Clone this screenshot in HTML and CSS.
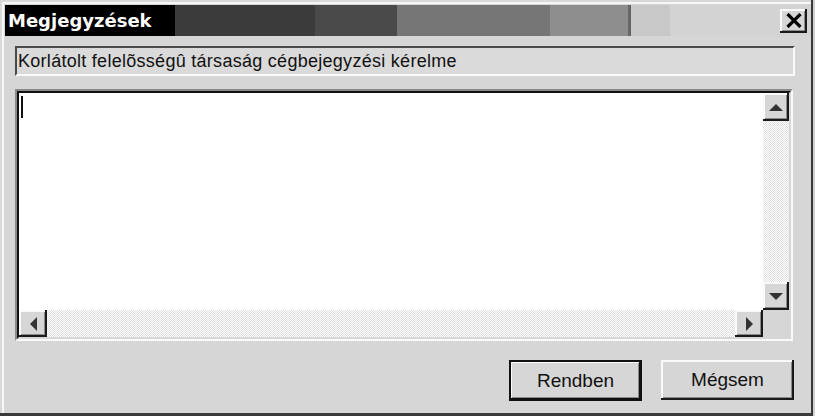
FILE: index.html
```html
<!DOCTYPE html>
<html lang="hu">
<head>
<meta charset="utf-8">
<title>Megjegyzések</title>
<link rel="stylesheet" href="styles.css">
</head>
<body>
<div class="window">
  <div class="titlebar">
    <span class="title">Megjegyzések</span>
    <button class="close" aria-label="Bezárás">
      <svg width="16" height="15" viewBox="0 0 16 15"><path d="M1.5 1 L14.5 14 M14.5 1 L1.5 14" stroke="#000" stroke-width="3.2" fill="none"/></svg>
    </button>
  </div>
  <div class="subject">Korlátolt felelõsségû társaság cégbejegyzési kérelme</div>
  <div class="editor">
    <div class="editor-inner">
      <div class="text-area"><span class="caret"></span></div>
      <div class="vscroll">
        <div class="sbtn vbtn"><svg width="14" height="7" viewBox="0 0 14 7"><path d="M7 0 L14 7 L0 7 Z" fill="#333"/></svg></div>
        <div class="track"></div>
        <div class="sbtn vbtn"><svg width="14" height="7" viewBox="0 0 14 7"><path d="M0 0 L14 0 L7 7 Z" fill="#333"/></svg></div>
      </div>
      <div class="hscroll">
        <div class="sbtn hbtn"><svg width="7" height="14" viewBox="0 0 7 14"><path d="M7 0 L7 14 L0 7 Z" fill="#333"/></svg></div>
        <div class="track"></div>
        <div class="sbtn hbtn"><svg width="7" height="14" viewBox="0 0 7 14"><path d="M0 0 L7 7 L0 14 Z" fill="#333"/></svg></div>
      </div>
      <div class="corner"></div>
    </div>
  </div>
  <div class="actions">
    <button class="btn default">Rendben</button>
    <button class="btn">Mégsem</button>
  </div>
</div>
</body>
</html>
```
FILE: styles.css
```css
html, body {
  margin: 0;
  padding: 0;
}
body {
  width: 815px;
  height: 416px;
  overflow: hidden;
  background: #d6d6d6;
}
.window {
  box-sizing: border-box;
  width: 815px;
  height: 416px;
  padding: 5px 4px 0 5px;
  background: #d6d6d6;
  font-family: "Liberation Sans", Arial, sans-serif;
  box-shadow:
    inset -2px 0 0 #d0d0d0,
    inset -4px -3px 0 #3a3a3a,
    inset 2px 2px 0 #d8d8d8,
    inset 4px 4px 0 #f6f6f6;
}
.titlebar {
  height: 31px;
  display: flex;
  align-items: center;
  justify-content: space-between;
  background: linear-gradient(to right,
    #000 0 170px,
    #3b3b3b 170px 310px,
    #4a4a4a 310px 392px,
    #767676 392px 545px,
    #8e8e8e 545px 623px,
    #666 623px 626px,
    #c8c8c8 626px 665px,
    #d3d3d3 665px 100%);
}
.title {
  color: #fff;
  font-family: "DejaVu Sans", Verdana, sans-serif;
  font-weight: bold;
  font-size: 18px;
  padding-left: 3px;
}
.close {
  width: 27px;
  height: 24px;
  margin-right: 4px;
  padding: 0;
  border: 0;
  background: #d6d6d6;
  display: flex;
  align-items: center;
  justify-content: center;
  box-shadow:
    inset -2px -2px 0 #1a1a1a,
    inset 2px 2px 0 #fafafa,
    inset -3px -3px 0 #8a8a8a;
}
.subject {
  box-sizing: border-box;
  margin: 10px 16px 0 10px;
  height: 30px;
  border: 2px solid;
  border-color: #4a4a4a #fafafa #fafafa #4a4a4a;
  background: #dadada;
  font-size: 18px;
  letter-spacing: 0.28px;
  color: #111;
  padding-left: 1px;
  display: flex;
  align-items: center;
  white-space: nowrap;
}
.editor {
  box-sizing: border-box;
  margin: 13px 18px 0 10px;
  height: 252px;
  border: 2px solid;
  border-color: #8a8a8a #fafafa #fafafa #8a8a8a;
}
.editor-inner {
  box-sizing: border-box;
  height: 100%;
  border: 2px solid;
  border-color: #111 #d6d6d6 #d6d6d6 #111;
  background: #fff;
  display: grid;
  grid-template-columns: 1fr 26px;
  grid-template-rows: 1fr 27px;
}
.text-area {
  padding: 3px 0 0 2px;
}
.caret {
  display: block;
  width: 2px;
  height: 22px;
  background: #111;
}
.vscroll {
  display: flex;
  flex-direction: column;
}
.hscroll {
  display: flex;
}
.track {
  flex: 1;
  background: repeating-conic-gradient(#fff 0 25%, #e0e0e0 0 50%) 0 0 / 2px 2px;
}
.sbtn {
  box-sizing: border-box;
  background: #d6d6d6;
  display: flex;
  align-items: center;
  justify-content: center;
  box-shadow:
    inset -2px -2px 0 #1a1a1a,
    inset 2px 2px 0 #fafafa,
    inset -3px -3px 0 #8a8a8a;
}
.vbtn {
  height: 28px;
}
.hbtn {
  width: 28px;
}
.corner {
  background: #d6d6d6;
}
.actions {
  display: flex;
  justify-content: flex-end;
  align-items: flex-start;
  gap: 19px;
  margin: 19px 17px 0 0;
}
.btn {
  width: 133px;
  height: 40px;
  padding: 0;
  border: 0;
  background: #d6d6d6;
  font-family: "Liberation Sans", Arial, sans-serif;
  font-size: 19px;
  color: #111;
  box-shadow:
    inset -2px -2px 0 #1a1a1a,
    inset 2px 2px 0 #fafafa,
    inset -3px -3px 0 #8a8a8a;
}
.btn.default {
  height: 41px;
  box-shadow:
    inset 0 0 0 2px #111,
    inset -3px -3px 0 #111,
    inset 3px 3px 0 #fafafa,
    inset -4px -4px 0 #8a8a8a;
}
```
